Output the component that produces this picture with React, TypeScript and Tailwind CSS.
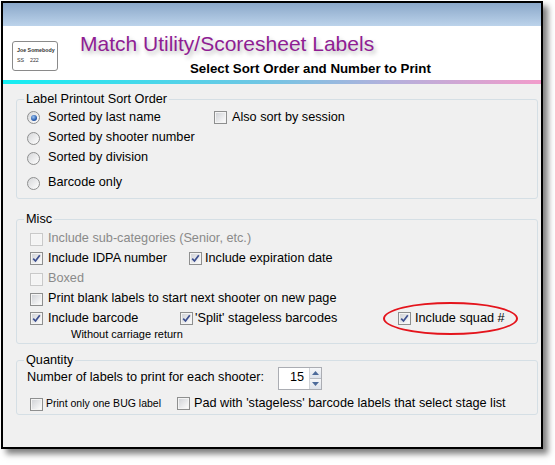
import React from "react";
import clsx from "clsx";

const Check: React.FC<{ checked?: boolean; disabled?: boolean }> = ({ checked, disabled }) => (
  <span
    className={clsx(
      "flex h-[13px] w-[13px] shrink-0 items-center justify-center border p-[1px]",
      disabled ? "border-[#c9c9c9] bg-[#f6f6f6]" : "border-[#8e8f8f] bg-[#f4f4f4]"
    )}
  >
    <span
      className={clsx(
        "flex h-full w-full items-center justify-center",
        disabled ? "bg-[#f4f4f4]" : "bg-linear-to-br from-[#d2d4d8] to-[#fbfbfb]"
      )}
    >
      {checked && (
        <svg width="9" height="9" viewBox="0 0 9 9">
          <path d="M1.2 4.6 L3.5 7 L7.8 1.2" stroke="#3d4f8f" strokeWidth="1.7" fill="none" />
        </svg>
      )}
    </span>
  </span>
);

const Radio: React.FC<{ checked?: boolean }> = ({ checked }) => (
  <span className="flex h-[13px] w-[13px] shrink-0 items-center justify-center rounded-full border border-[#8e8f8f] bg-linear-to-br from-[#d6d7d9] to-white">
    {checked && (
      <span className="h-[6px] w-[6px] rounded-full bg-[radial-gradient(circle_at_40%_35%,#9cc6f2,#2a5cae_60%,#173a7a)]" />
    )}
  </span>
);

const Group: React.FC<{ title: string; className?: string; children: React.ReactNode }> = ({
  title,
  className,
  children,
}) => (
  <fieldset className={clsx("ml-[13px] mr-[3px] rounded-[3px] border border-[#d5dfe5]", className)}>
    <legend className="ml-[7px] px-[2px] text-[12.7px] leading-[14px]">{title}</legend>
    {children}
  </fieldset>
);

const App: React.FC = () => {
  return (
    <div className="h-[465px] w-[555px] bg-white pl-[1px] pt-[1px] font-['Liberation_Sans',Arial,sans-serif] text-black">
      <div className="flex h-[448px] w-[542px] flex-col border-2 border-black bg-[#f0f0f0] shadow-[5px_5px_6px_rgba(0,0,0,0.5)]">
        {/* title bar */}
        <div className="h-[23px] shrink-0 bg-linear-to-b from-[#8ba8c9] to-[#bcd3eb]" />

        {/* header */}
        <div className="flex h-[54px] shrink-0 items-start bg-white">
          <div className="ml-[9px] mt-[15px] flex h-[30px] w-[46px] flex-col rounded-[3px] border border-[#8a8a8a] pl-[4px] pt-[4px] text-[5.3px] font-bold leading-[8px] whitespace-nowrap text-[#333]">
            <span>Joe Somebody</span>
            <span className="mt-[2px] font-normal">SS&nbsp;&nbsp;&nbsp;&nbsp;222</span>
          </div>
          <div className="ml-[22px] flex flex-col pt-[6px]">
            <span className="text-[21px] leading-[24px] text-[#8f1d93] [text-shadow:2px_3px_4px_rgba(0,0,0,0.28)]">
              Match Utility/Scoresheet Labels
            </span>
            <span className="ml-[110px] mt-[5px] whitespace-nowrap text-[13.3px] font-bold leading-[16px]">
              Select Sort Order and Number to Print
            </span>
          </div>
        </div>
        <div className="h-[4px] shrink-0 bg-[linear-gradient(to_right,#14eef2,#70c6e4_48%,#b4b0dc_72%,#f29ccb)]" />

        {/* body */}
        <div className="flex flex-col text-[12.7px]">
          <Group title="Label Printout Sort Order" className="mt-[8px] pb-[5px]">
            <div className="flex flex-col pt-[2px]">
              <div className="flex h-[20px] items-center">
                <div className="flex w-[197px] items-center gap-[8px] pl-[10px]">
                  <Radio checked />
                  <span>Sorted by last name</span>
                </div>
                <div className="flex items-center gap-[5px]">
                  <Check />
                  <span>Also sort by session</span>
                </div>
              </div>
              <div className="flex h-[20px] items-center gap-[8px] pl-[10px]">
                <Radio />
                <span>Sorted by shooter number</span>
              </div>
              <div className="flex h-[20px] items-center gap-[8px] pl-[10px]">
                <Radio />
                <span>Sorted by division</span>
              </div>
              <div className="mt-[5px] flex h-[20px] items-center gap-[8px] pl-[10px]">
                <Radio />
                <span>Barcode only</span>
              </div>
            </div>
          </Group>

          <Group title="Misc" className="mt-[13px] pb-[3px]">
            <div className="flex flex-col pl-[13px] pt-[3px]">
              <div className="flex h-[20px] items-center gap-[5px] text-[#8a8a8a]">
                <Check disabled />
                <span>Include sub-categories (Senior, etc.)</span>
              </div>
              <div className="flex h-[20px] items-center">
                <div className="flex w-[159px] items-center gap-[5px]">
                  <Check checked />
                  <span>Include IDPA number</span>
                </div>
                <div className="flex items-center gap-[3px]">
                  <Check checked />
                  <span>Include expiration date</span>
                </div>
              </div>
              <div className="flex h-[20px] items-center gap-[5px] text-[#8a8a8a]">
                <Check disabled />
                <span>Boxed</span>
              </div>
              <div className="flex h-[20px] items-center gap-[5px]">
                <Check />
                <span>Print blank labels to start next shooter on new page</span>
              </div>
              <div className="flex h-[20px] items-center">
                <div className="flex w-[150px] items-center gap-[5px]">
                  <Check checked />
                  <span>Include barcode</span>
                </div>
                <div className="flex w-[218px] items-center gap-[2px]">
                  <Check checked />
                  <span>'Split' stageless barcodes</span>
                </div>
                <div className="relative flex items-center gap-[4px]">
                  <Check checked />
                  <span>Include squad #</span>
                  <span className="absolute left-[-15px] top-[-7px] h-[33px] w-[135px] rounded-[50%] border-2 border-[#e4141c]" />
                </div>
              </div>
              <div className="-mt-[1px] pl-[41px] text-[11px] leading-[12px]">Without carriage return</div>
            </div>
          </Group>

          <Group title="Quantity" className="mt-[9px]">
            <div className="flex flex-col">
              <div className="flex h-[22px] items-center pl-[10px]">
                <span className="w-[251px]">Number of labels to print for each shooter:</span>
                <div className="flex h-[23px] w-[44px] border border-[#abadb3] bg-white">
                  <span className="flex flex-1 items-center pl-[11px]">15</span>
                  <div className="flex w-[12px] flex-col border-l border-[#cfd2d6]">
                    <span className="flex flex-1 items-center justify-center border-b border-[#b9bcc2] bg-linear-to-b from-[#f6f7f9] to-[#dde2ea]">
                      <svg width="7" height="4" viewBox="0 0 7 4">
                        <path d="M0 4 L3.5 0 L7 4 Z" fill="#4c6a9a" />
                      </svg>
                    </span>
                    <span className="flex flex-1 items-center justify-center bg-linear-to-b from-[#f6f7f9] to-[#dde2ea]">
                      <svg width="7" height="4" viewBox="0 0 7 4">
                        <path d="M0 0 L7 0 L3.5 4 Z" fill="#4c6a9a" />
                      </svg>
                    </span>
                  </div>
                </div>
              </div>
              <div className="mt-[5px] flex h-[20px] items-center pl-[13px]">
                <div className="flex w-[147px] items-center gap-[3px] text-[10.5px]">
                  <Check />
                  <span>Print only one BUG label</span>
                </div>
                <div className="flex items-center gap-[4px]">
                  <Check />
                  <span>Pad with 'stageless' barcode labels that select stage list</span>
                </div>
              </div>
            </div>
          </Group>
        </div>
      </div>
    </div>
  );
};

export default App;
